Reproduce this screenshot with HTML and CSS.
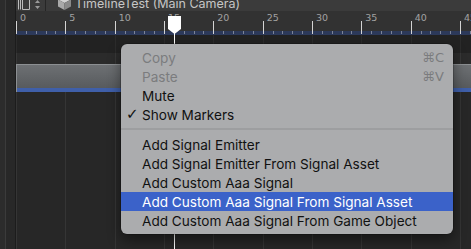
FILE: index.html
```html
<!DOCTYPE html>
<html lang="en">
<head>
    <meta charset="UTF-8">
    <meta name="viewport" content="width=device-width, initial-scale=1.0">
    <title>Timeline</title>
    <link rel="stylesheet" href="styles.css">
</head>
<body>
    <div class="editor">
        <div class="gutter"></div>

        <div class="main">
            <div class="header">
                <div class="tools">
                    <svg class="layout-icon" width="12" height="11" viewBox="0 0 12 11">
                        <path d="M0.5 0.5 V10.5 M2.5 0.5 V10.5 M4.5 0.5 H11.5 V10.5 H4.5 Z" fill="none" stroke="#bdbdbd" stroke-width="1"/>
                    </svg>
                    <svg class="arrows-icon" width="5" height="9" viewBox="0 0 5 9">
                        <path d="M2.5 0 L5 3 H0 Z M2.5 9 L5 6 H0 Z" fill="#9a9a9a"/>
                    </svg>
                </div>
                <div class="title">
                    <svg class="cube" width="13" height="14" viewBox="0 0 13 14">
                        <path d="M6.5 0 L13 3.5 L6.5 7 L0 3.5 Z" fill="#d2d2d2"/>
                        <path d="M0 3.5 L6.5 7 V14 L0 10.5 Z" fill="#a9a9a9"/>
                        <path d="M13 3.5 L6.5 7 V14 L13 10.5 Z" fill="#8a8a8a"/>
                    </svg>
                    <span>TimelineTest (Main Camera)</span>
                </div>
            </div>

            <div class="ruler">
                <div class="labels">
                    <span>0</span><span>5</span><span>10</span><span>15</span><span>20</span>
                    <span>25</span><span>30</span><span>35</span><span>40</span><span>45</span>
                </div>
            </div>

            <div class="lane-head"></div>
            <div class="lane-gap"></div>
            <div class="clip"></div>
            <div class="lanes"></div>
        </div>

        <div class="playhead">
            <svg class="playhead-head" width="13" height="18" viewBox="0 0 13 18">
                <path d="M0 0 H13 V13 L6.5 18 L0 13 Z" fill="#ffffff"/>
            </svg>
        </div>

        <!-- context menu -->
        <div class="menu">
            <div class="item disabled"><span class="mark"></span><span class="label">Copy</span><span class="key">⌘C</span></div>
            <div class="item disabled"><span class="mark"></span><span class="label">Paste</span><span class="key">⌘V</span></div>
            <div class="item"><span class="mark"></span><span class="label">Mute</span></div>
            <div class="item"><span class="mark">✓</span><span class="label">Show Markers</span></div>
            <div class="separator"></div>
            <div class="item"><span class="mark"></span><span class="label">Add Signal Emitter</span></div>
            <div class="item"><span class="mark"></span><span class="label">Add Signal Emitter From Signal Asset</span></div>
            <div class="item"><span class="mark"></span><span class="label">Add Custom Aaa Signal</span></div>
            <div class="item selected"><span class="mark"></span><span class="label">Add Custom Aaa Signal From Signal Asset</span></div>
            <div class="item"><span class="mark"></span><span class="label">Add Custom Aaa Signal From Game Object</span></div>
        </div>
    </div>
</body>
</html>
```

FILE: styles.css
```css
* {
    margin: 0;
    padding: 0;
    box-sizing: border-box;
}

body {
    background-color: #262626;
    font-family: 'Inter', 'Liberation Sans', sans-serif;
}

.editor {
    position: relative;
    display: flex;
    width: 471px;
    height: 249px;
    overflow: hidden;
}

.gutter {
    flex: 0 0 16px;
    background: linear-gradient(90deg, #2c2c2c 0 5px, #3b3b3b 5px 6px, #282828 6px 15px, #1c1c1c 15px 16px);
}

.main {
    flex: 1;
    min-width: 0;
    display: flex;
    flex-direction: column;
    overflow: hidden;
}

.header {
    height: 11px;
    display: flex;
    align-items: flex-end;
    overflow: hidden;
    background-color: #3b3b3b;
}

.tools {
    flex: 0 0 30px;
    height: 11px;
    display: flex;
    align-items: flex-end;
    gap: 5px;
    padding-left: 2px;
    border-right: 1px solid #262626;
}

.layout-icon {
    display: block;
    margin-bottom: 1px;
}

.arrows-icon {
    display: block;
    margin-bottom: 2px;
}

.title {
    display: flex;
    align-items: flex-end;
    gap: 4px;
    margin-left: 12px;
    color: #c6c6c6;
    font-size: 12.5px;
    line-height: 14px;
    white-space: nowrap;
}

.cube {
    display: block;
    margin-bottom: 1px;
}

.ruler {
    height: 24px;
    overflow: hidden;
    background:
        repeating-linear-gradient(90deg, #d4d4d4 0 1px, transparent 1px 49.33px) 0 10px / 100% 13px no-repeat,
        repeating-linear-gradient(90deg, #7d8498 0 1px, transparent 1px 9.866px) 0 20px / 100% 3px no-repeat,
        linear-gradient(#2c395a, #2c395a) 0 20px / 100% 4px no-repeat,
        #323232;
}

.labels {
    display: flex;
    padding-top: 1px;
    font-family: 'DejaVu Sans', sans-serif;
    font-size: 9.5px;
    line-height: 12px;
    color: #a2a2a2;
}

.labels span {
    flex: 0 0 49.33px;
    padding-left: 4px;
}

.lane-head {
    height: 18px;
    background: repeating-linear-gradient(90deg, #2c2c2c 0 1px, transparent 1px 49.33px), #222222;
}

.lane-gap {
    height: 11px;
    background: repeating-linear-gradient(90deg, #383838 0 1px, transparent 1px 49.33px), #2b2b2b;
}

.clip {
    height: 28px;
    border-top: 1px solid #8c8f92;
    border-left: 1px solid #8c8f92;
    background:
        linear-gradient(#3f5fa9, #3f5fa9) 0 100% / 100% 4px no-repeat,
        linear-gradient(#6d7073, #54575a);
}

.lanes {
    flex: 1;
    background: repeating-linear-gradient(90deg, #353535 0 1px, transparent 1px 49.33px), #272727;
}

.playhead {
    position: absolute;
    left: 174px;
    top: 16px;
    bottom: 0;
    width: 1px;
    background-color: #ffffff;
}

.playhead-head {
    position: absolute;
    left: -6px;
    top: 0;
    display: block;
}

.menu {
    position: absolute;
    left: 121px;
    top: 44px;
    width: 332px;
    padding: 4px 0;
    background-color: #abacae;
    border-radius: 6px;
    box-shadow: 0 0 0 0.5px rgba(0, 0, 0, 0.35), 0 6px 14px rgba(0, 0, 0, 0.45);
    font-size: 13.6px;
    color: #111111;
}

.item {
    display: flex;
    align-items: center;
    height: 19px;
    padding-right: 9px;
    white-space: nowrap;
}

.item .mark {
    flex: 0 0 21px;
    padding-left: 5px;
    font-family: 'DejaVu Sans', sans-serif;
    font-size: 15px;
    font-weight: bold;
    line-height: 19px;
}

.item .label {
    flex: 1;
}

.item .key {
    font-family: 'DejaVu Sans', sans-serif;
    font-size: 13px;
    color: #7b7c7e;
}

.item.disabled {
    color: #7b7c7e;
}

.item.selected {
    background-color: #3b62c9;
    color: #ffffff;
}

.separator {
    height: 2px;
    margin: 4px 0 5px;
    background-color: #9d9ea0;
}
```
